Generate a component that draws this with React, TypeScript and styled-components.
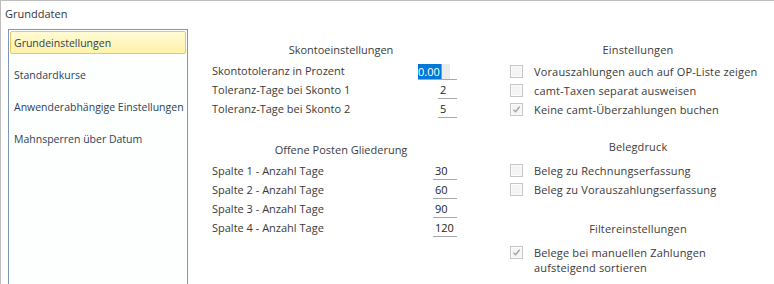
import React from "react";
import styled, { createGlobalStyle } from "styled-components";

const GlobalStyle = createGlobalStyle`
  html, body { margin: 0; padding: 0; background: #ffffff; }
  body { font-family: "Open Sans", "Noto Sans", Arial, sans-serif; font-size: 11px; color: #3a3a3a; }
  * { box-sizing: border-box; }
`;

const Frame = styled.div`
  width: 774px;
  height: 284px;
  border-top: 1px solid #bdbdbd;
  border-left: 1px solid #bdbdbd;
  overflow: hidden;
  display: flex;
  flex-direction: column;
`;

const Title = styled.div`
  height: 28px;
  padding: 5px 0 0 4px;
  line-height: 16px;
  font-size: 11px;
  color: #333;
`;

const Body = styled.div`
  flex: 1;
  display: flex;
  align-items: stretch;
`;

const Sidebar = styled.nav`
  width: 180px;
  margin-left: 7px;
  border: 1px solid #7f97b6;
  border-bottom: none;
  background: #fdfefe;
  padding: 1px;
  display: flex;
  flex-direction: column;
`;

const NavItem = styled.div<{ $active?: boolean }>`
  height: 23px;
  margin-bottom: 9px;
  padding: 0 3px;
  line-height: 23px;
  font-size: 10.5px;
  border: 1px solid ${(p) => (p.$active ? "#e6c766" : "transparent")};
  border-radius: 2px;
  background: ${(p) => (p.$active ? "linear-gradient(#fffbd6, #fff2a8)" : "transparent")};
  color: #2e3f57;
  white-space: nowrap;
`;

const Column = styled.section<{ $left: number; $width: number; $spacing?: number }>`
  margin-left: ${(p) => p.$left}px;
  width: ${(p) => p.$width}px;
  padding-top: 11px;
  letter-spacing: ${(p) => p.$spacing ?? 0}px;
  display: flex;
  flex-direction: column;
`;

const Heading = styled.div<{ $gap?: number; $after?: number }>`
  height: 19px;
  line-height: 19px;
  text-align: center;
  margin-top: ${(p) => p.$gap ?? 0}px;
  margin-bottom: ${(p) => p.$after ?? 3}px;
  color: #3c3c3c;
`;

const FieldRow = styled.div`
  display: flex;
  align-items: flex-start;
  height: 19px;
  padding-right: 13px;
`;

const Label = styled.div`
  flex: 1;
  line-height: 18px;
  white-space: nowrap;
`;

const Field = styled.div<{ $width: number }>`
  width: ${(p) => p.$width}px;
  height: 18px;
  border-bottom: 1px solid #a8a8a8;
  line-height: 17px;
  padding-left: 2px;
  color: #222;
  display: flex;
  align-items: center;
`;

const SelField = styled(Field)`
  padding-left: 0;
  padding-top: 2px;
`;

const SelBox = styled.div`
  width: 32px;
  height: 15px;
  background: #ececec;
  display: flex;
`;

const Selected = styled.span`
  background: #0078d7;
  color: #ffffff;
  line-height: 15px;
  padding-right: 1px;
  border-right: 1px solid #ff7b16;
`;

const CheckRow = styled.div`
  display: flex;
  align-items: flex-start;
  padding: 2px 0;
  min-height: 19px;
`;

const Box = styled.div`
  width: 13px;
  height: 13px;
  margin-top: 1px;
  border: 1px solid #c6c6c6;
  background: #f4f4f4;
  box-shadow: inset 0 0 0 1px #fbfbfb;
  flex: none;
  display: flex;
  align-items: center;
  justify-content: center;
`;

const CheckText = styled.div`
  margin-left: 11px;
  line-height: 15px;
`;

const Check: React.FC<{ checked?: boolean; children: React.ReactNode }> = ({ checked, children }) => (
  <CheckRow>
    <Box>
      {checked && (
        <svg width="9" height="9" viewBox="0 0 9 9">
          <path d="M1.5 4.8 L3.6 6.8 L7.6 1.8" fill="none" stroke="#a4a4a4" strokeWidth="1.4" />
        </svg>
      )}
    </Box>
    <CheckText>{children}</CheckText>
  </CheckRow>
);

const nav = ["Grundeinstellungen", "Standardkurse", "Anwenderabhängige Einstellungen", "Mahnsperren über Datum"];

const spalten = [
  ["Spalte 1 - Anzahl Tage", "30"],
  ["Spalte 2 - Anzahl Tage", "60"],
  ["Spalte 3 - Anzahl Tage", "90"],
  ["Spalte 4 - Anzahl Tage", "120"],
];

export default function App() {
  return (
    <>
      <GlobalStyle />
      <Frame>
        <Title>Grunddaten</Title>
        <Body>
          <Sidebar>
            {nav.map((n, i) => (
              <NavItem key={n} $active={i === 0}>
                {n}
              </NavItem>
            ))}
          </Sidebar>
          <Column $left={24} $width={258}>
            <Heading>Skontoeinstellungen</Heading>
            <FieldRow>
              <Label>Skontotoleranz in Prozent</Label>
              <SelField $width={39}>
                <SelBox>
                  <Selected>0.00</Selected>
                </SelBox>
              </SelField>
            </FieldRow>
            <FieldRow>
              <Label>Toleranz-Tage bei Skonto 1</Label>
              <Field $width={19}>2</Field>
            </FieldRow>
            <FieldRow>
              <Label>Toleranz-Tage bei Skonto 2</Label>
              <Field $width={19}>5</Field>
            </FieldRow>
            <Heading $gap={21}>Offene Posten Gliederung</Heading>
            {spalten.map(([l, v]) => (
              <FieldRow key={l}>
                <Label>{l}</Label>
                <Field $width={24}>{v}</Field>
              </FieldRow>
            ))}
          </Column>
          <Column $left={40} $width={256} $spacing={0.15}>
            <Heading>Einstellungen</Heading>
            <Check>Vorauszahlungen auch auf OP-Liste zeigen</Check>
            <Check>camt-Taxen separat ausweisen</Check>
            <Check checked>Keine camt-Überzahlungen buchen</Check>
            <Heading $gap={18} $after={5}>Belegdruck</Heading>
            <Check>Beleg zu Rechnungserfassung</Check>
            <Check>Beleg zu Vorauszahlungserfassung</Check>
            <Heading $gap={20} $after={5}>Filtereinstellungen</Heading>
            <Check checked>
              Belege bei manuellen Zahlungen
              <br />
              aufsteigend sortieren
            </Check>
          </Column>
        </Body>
      </Frame>
    </>
  );
}
